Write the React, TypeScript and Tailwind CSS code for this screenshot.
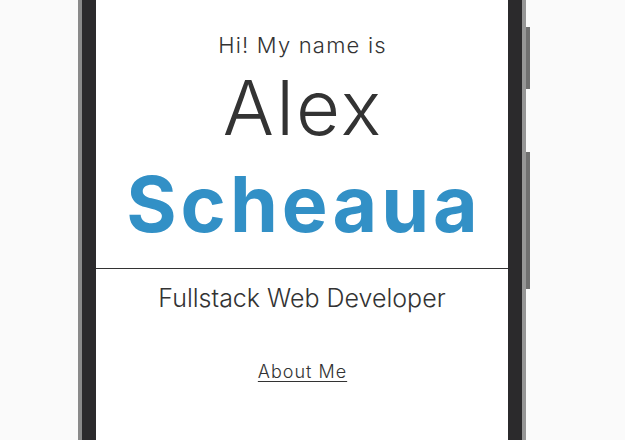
export default function App() {
  return (
    <div className="h-[440px] w-[625px] overflow-hidden bg-[#fafafa]">
      <div className="ml-[78px] flex h-[440px]">
        {/* phone frame, left edge */}
        <div className="w-[4px] bg-[#8a8a8a]" />
        <div className="w-[14px] bg-[#2b2a2c]" />

        {/* screen */}
        <div
          className="flex w-[412px] flex-col items-center bg-white text-[#333333]"
          style={{ fontFamily: "Inter, 'Open Sans', sans-serif" }}
        >
          <p className="mt-[34px] -mr-[1px] text-[22px] leading-none font-light tracking-[1.2px]">Hi! My name is</p>
          <h1 className="mt-[13px] -mr-[2px] text-[76px] leading-none font-light tracking-[2.2px]">Alex</h1>
          <h2 className="mt-[21px] -mr-[4px] text-[77px] leading-none font-bold tracking-[4px] text-[#3290c6]">
            Scheaua
          </h2>
          <hr className="mt-[25px] w-full border-t border-[#333333]" />
          <p className="mt-[17px] text-[25px] leading-none font-light">Fullstack Web Developer</p>
          <a
            href="#"
            className="mt-[52px] -mr-[1px] text-[18px] leading-none font-light tracking-[1px] underline underline-offset-[3px]"
          >
            About Me
          </a>
        </div>

        {/* phone frame, right edge */}
        <div className="w-[14px] bg-[#2b2a2c]" />
        <div className="w-[4px] bg-[#969696]" />
        <div className="flex w-[4px] flex-col pt-[27px]">
          <div className="h-[62px] bg-[#707070]" />
          <div className="mt-[63px] h-[137px] bg-[#707070]" />
        </div>
      </div>
    </div>
  );
}
